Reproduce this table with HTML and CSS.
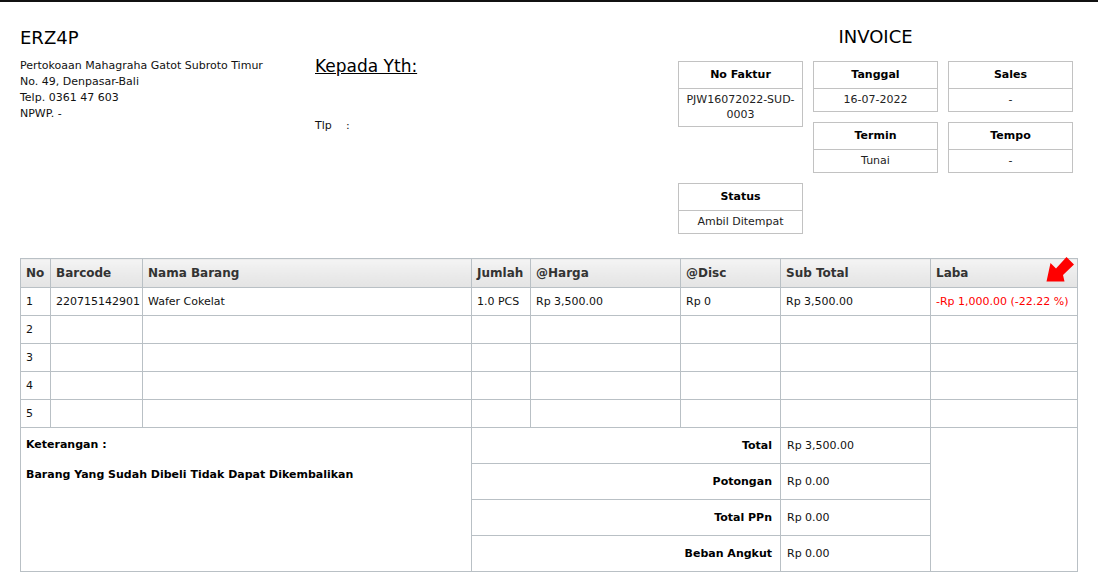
FILE: index.html
```html
<!DOCTYPE html>
<html>
<head>
<meta charset="utf-8">
<title>Invoice</title>
<link rel="stylesheet" href="styles.css">
</head>
<body>
<div class="page">
  <header class="top">
    <div class="company">
      <h1 class="company-name">ERZ4P</h1>
      <p class="company-info">Pertokoaan Mahagraha Gatot Subroto Timur<br>No. 49, Denpasar-Bali<br>Telp. 0361 47 603<br>NPWP. -</p>
    </div>
    <div class="customer">
      <h2 class="customer-title">Kepada Yth:</h2>
      <p class="customer-tlp"><span class="tlp-label">Tlp</span>:</p>
    </div>
    <div class="invoice">
      <h2 class="invoice-title">INVOICE</h2>
      <div class="boxes">
        <div class="box box-faktur">
          <div class="box-head">No Faktur</div>
          <div class="box-val">PJW16072022-SUD-0003</div>
        </div>
        <div class="box">
          <div class="box-head">Tanggal</div>
          <div class="box-val">16-07-2022</div>
        </div>
        <div class="box">
          <div class="box-head">Sales</div>
          <div class="box-val">-</div>
        </div>
        <div class="box">
          <div class="box-head">Termin</div>
          <div class="box-val">Tunai</div>
        </div>
        <div class="box">
          <div class="box-head">Tempo</div>
          <div class="box-val">-</div>
        </div>
        <div class="box">
          <div class="box-head">Status</div>
          <div class="box-val">Ambil Ditempat</div>
        </div>
      </div>
    </div>
  </header>

  <div class="table-wrap">
    <table class="items">
      <colgroup>
        <col class="c-no"><col class="c-barcode"><col class="c-nama"><col class="c-jumlah">
        <col class="c-harga"><col class="c-disc"><col class="c-sub"><col class="c-laba">
      </colgroup>
      <thead>
        <tr>
          <th>No</th><th>Barcode</th><th>Nama Barang</th><th>Jumlah</th>
          <th>@Harga</th><th>@Disc</th><th>Sub Total</th><th>Laba</th>
        </tr>
      </thead>
      <tbody>
        <tr>
          <td>1</td><td>220715142901</td><td>Wafer Cokelat</td><td>1.0 PCS</td>
          <td>Rp 3,500.00</td><td>Rp 0</td><td>Rp 3,500.00</td><td class="loss">-Rp 1,000.00 (-22.22 %)</td>
        </tr>
        <tr><td>2</td><td></td><td></td><td></td><td></td><td></td><td></td><td></td></tr>
        <tr><td>3</td><td></td><td></td><td></td><td></td><td></td><td></td><td></td></tr>
        <tr><td>4</td><td></td><td></td><td></td><td></td><td></td><td></td><td></td></tr>
        <tr><td>5</td><td></td><td></td><td></td><td></td><td></td><td></td><td></td></tr>
        <tr class="sum">
          <td colspan="3" rowspan="4" class="note">Keterangan :<br><br>Barang Yang Sudah Dibeli Tidak Dapat Dikembalikan</td>
          <td colspan="3" class="sum-label">Total</td>
          <td class="sum-val">Rp 3,500.00</td>
          <td rowspan="4"></td>
        </tr>
        <tr class="sum">
          <td colspan="3" class="sum-label">Potongan</td>
          <td class="sum-val">Rp 0.00</td>
        </tr>
        <tr class="sum">
          <td colspan="3" class="sum-label">Total PPn</td>
          <td class="sum-val">Rp 0.00</td>
        </tr>
        <tr class="sum">
          <td colspan="3" class="sum-label">Beban Angkut</td>
          <td class="sum-val">Rp 0.00</td>
        </tr>
      </tbody>
    </table>
    <svg class="arrow" width="30" height="27" viewBox="0 0 30 27">
      <polygon points="1.5,25.5 5.5,7 11,12.5 21.5,1 29,8.5 18,19 19.5,25.5" fill="#ff0000"/>
    </svg>
  </div>
</div>
</body>
</html>
```

FILE: styles.css
```css
* { box-sizing: border-box; }

html, body {
  margin: 0;
  padding: 0;
  background: #fff;
}

body {
  font-family: "DejaVu Sans", Verdana, sans-serif;
  font-size: 11px;
  color: #111;
  border-top: 2px solid #111;
  margin-top: 0;
}

.page {
  padding: 0 20px 16px 20px;
}

.top {
  display: flex;
  padding-top: 24px;
}

.company {
  width: 295px;
  padding-top: 1px;
}

.company-name {
  margin: 0;
  font-size: 18px;
  line-height: 22px;
  font-weight: normal;
  color: #000;
}

.company-info {
  margin: 9px 0 0 0;
  line-height: 16px;
}

.customer {
  flex: 1;
  padding-top: 30px;
}

.customer-title {
  margin: 0;
  font-size: 17px;
  line-height: 20px;
  font-weight: normal;
  text-decoration: underline;
  color: #000;
}

.customer-tlp {
  margin: 42px 0 0 0;
  line-height: 16px;
}

.tlp-label {
  display: inline-block;
  width: 31px;
}

.invoice {
  width: 395px;
  margin-right: 5px;
}

.invoice-title {
  margin: 0 0 13px 0;
  font-size: 18px;
  line-height: 22px;
  font-weight: normal;
  text-align: center;
  color: #000;
}

.boxes {
  display: grid;
  grid-template-columns: 125px 125px 125px;
  column-gap: 10px;
  row-gap: 10px;
  align-items: start;
}

.box {
  border: 1px solid #c2c2c2;
  text-align: center;
}

.box-faktur {
  grid-row: 1 / 3;
}

.box-head {
  font-weight: bold;
  line-height: 15px;
  padding: 5px 4px 6px;
  border-bottom: 1px solid #c2c2c2;
  color: #000;
}

.box-val {
  line-height: 15px;
  padding: 3px 4px 4px;
  word-break: break-all;
  color: #222;
}

.table-wrap {
  position: relative;
  margin-top: 24px;
}

.items {
  width: 1057px;
  table-layout: fixed;
  border-collapse: collapse;
  border: 1px solid #b9c0c5;
}

.c-no { width: 30px; }
.c-barcode { width: 92px; }
.c-nama { width: 329px; }
.c-jumlah { width: 59px; }
.c-harga { width: 150px; }
.c-disc { width: 100px; }
.c-sub { width: 150px; }
.c-laba { width: 147px; }

.items th,
.items td {
  border: 1px solid #b9c0c5;
  text-align: left;
  vertical-align: middle;
  white-space: nowrap;
  overflow: hidden;
}

.items th {
  font-size: 12px;
  font-weight: bold;
  color: #333;
  line-height: 16px;
  padding: 6px 5px;
  background: linear-gradient(#f4f4f4 0%, #ececec 45%, #e4e4e4 100%);
}

.items td {
  line-height: 15px;
  padding: 6px 5px 6px;
  height: 28px;
  color: #111;
}

.items .loss {
  color: #ff0000;
}

.items .sum td {
  height: 36px;
  padding: 10px 5px;
}

.items .sum .note {
  vertical-align: top;
  font-weight: bold;
  padding: 9px 5px 7px;
  color: #000;
}

.items .sum .sum-label {
  text-align: right;
  font-weight: bold;
  padding-right: 8px;
  color: #000;
}

.items .sum .sum-val {
  padding-left: 6px;
}

.arrow {
  position: absolute;
  left: 1025px;
  top: -2px;
}
```
